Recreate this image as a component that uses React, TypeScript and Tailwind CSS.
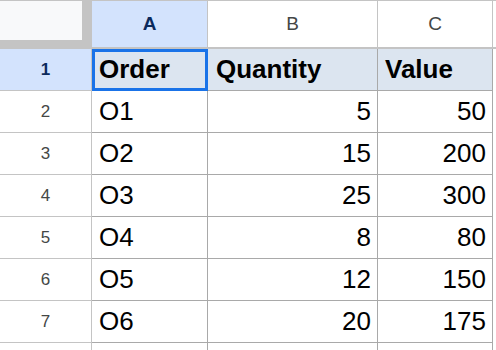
import React from "react";

const rows: [string, number, number][] = [
  ["O1", 5, 50],
  ["O2", 15, 200],
  ["O3", 25, 300],
  ["O4", 8, 80],
  ["O5", 12, 150],
  ["O6", 20, 175],
];

export default function App() {
  return (
    <div className="w-[496px] h-[350px] bg-white overflow-hidden font-['Liberation_Sans',Arial,sans-serif]">
      {/* column header row */}
      <div className="flex h-[49px]">
        <div className="w-[92px] h-full bg-[#c4c4c4] shrink-0">
          <div className="w-[82px] h-[39px] mt-[1px] bg-[#f8f9fa]" />
        </div>
        <div className="w-[116px] shrink-0 h-full border-t border-b-2 border-r border-[#c4c4c4] bg-[#d3e3fd] flex items-center justify-center text-[19px] font-bold text-[#0b2a5c]">
          A
        </div>
        <div className="w-[170px] shrink-0 h-full border-t border-b-2 border-r border-[#c4c4c4] bg-white flex items-center justify-center text-[19px] text-[#444746]">
          B
        </div>
        <div className="w-[115px] shrink-0 h-full border-t border-b-2 border-r border-[#c4c4c4] bg-white flex items-center justify-center text-[19px] text-[#444746]">
          C
        </div>
        <div className="flex-1 h-full border-t border-b-2 border-[#c4c4c4]" />
      </div>

      {/* header data row */}
      <div className="flex h-[42px]">
        <div className="w-[92px] shrink-0 h-full border-r border-b border-[#c4c4c4] bg-[#d3e3fd] flex items-center justify-center text-[17px] font-bold text-[#0b2a5c]">
          1
        </div>
        <div className="relative w-[116px] shrink-0 h-full border-r border-b border-[#a9a9a9] bg-[#dce5f0] flex items-center pl-[7px] text-[26px] font-bold text-black">
          Order
          <div className="absolute left-0 top-0 right-[-1px] bottom-[-1px] border-[3px] border-[#1a73e8]" />
        </div>
        <div className="w-[170px] shrink-0 h-full border-r border-b border-[#a9a9a9] bg-[#dce5f0] flex items-center pl-[8px] text-[26px] font-bold text-black">
          Quantity
        </div>
        <div className="w-[115px] shrink-0 h-full border-r border-b border-[#a9a9a9] bg-[#dce5f0] flex items-center pl-[7px] text-[26px] font-bold text-black">
          Value
        </div>
        <div className="flex-1 h-full" />
      </div>

      {rows.map(([o, q, v], i) => (
        <div key={o} className="flex h-[42px]">
          <div className="w-[92px] shrink-0 h-full border-r border-b border-[#c4c4c4] bg-white flex items-center justify-center text-[17px] text-[#444746]">
            {i + 2}
          </div>
          <div className="w-[116px] shrink-0 h-full border-r border-b border-[#a9a9a9] flex items-center pl-[7px] text-[26px] text-black">
            {o}
          </div>
          <div className="w-[170px] shrink-0 h-full border-r border-b border-[#a9a9a9] flex items-center justify-end pr-[6px] text-[26px] text-black">
            {q}
          </div>
          <div className="w-[115px] shrink-0 h-full border-r border-b border-[#a9a9a9] flex items-center justify-end pr-[6px] text-[26px] text-black">
            {v}
          </div>
          <div className="flex-1 h-full" />
        </div>
      ))}

      {/* partial row */}
      <div className="flex h-[20px]">
        <div className="w-[92px] shrink-0 h-full border-r border-[#c4c4c4]" />
        <div className="w-[116px] shrink-0 h-full border-r border-[#a9a9a9]" />
        <div className="w-[170px] shrink-0 h-full border-r border-[#a9a9a9]" />
        <div className="w-[115px] shrink-0 h-full border-r border-[#a9a9a9]" />
      </div>
    </div>
  );
}
